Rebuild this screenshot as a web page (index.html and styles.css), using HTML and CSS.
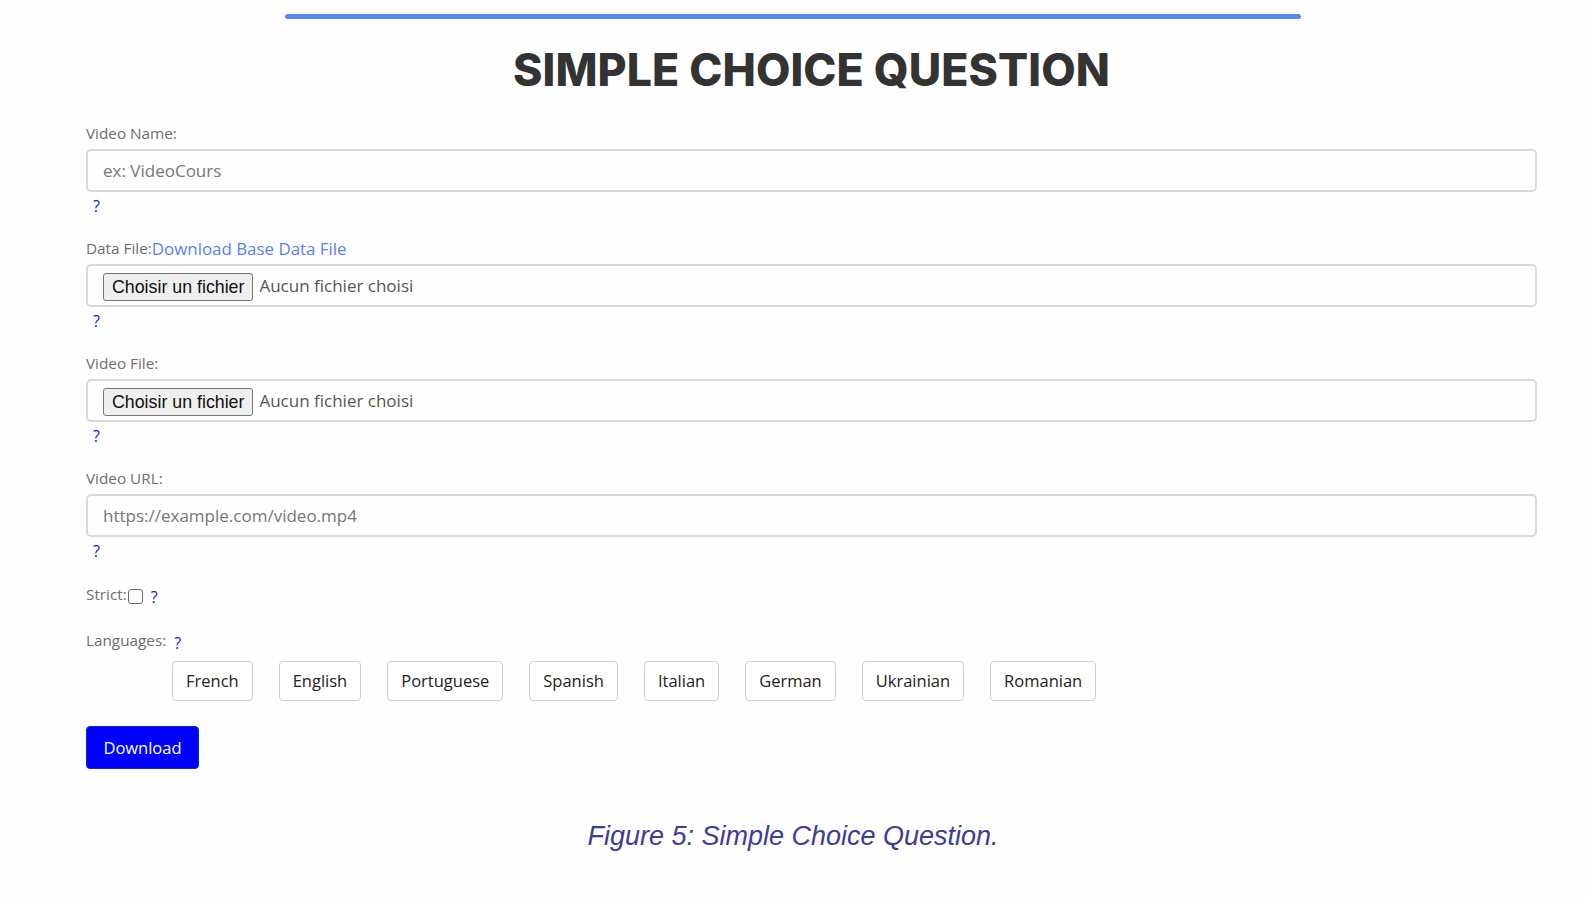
FILE: index.html
```html
<!DOCTYPE html>
<html lang="en">
<head>
<meta charset="utf-8">
<title>Simple Choice Question</title>
<link rel="stylesheet" href="styles.css">
</head>
<body>
  <div class="topbar-wrap"><div class="topbar"></div></div>
  <main class="container">
    <h1 class="title">SIMPLE CHOICE QUESTION</h1>
    <form class="form">
      <div class="group">
        <label class="label">Video Name:</label>
        <div class="field"><span class="placeholder">ex: VideoCours</span></div>
        <div class="help">?</div>
      </div>
      <div class="group">
        <label class="label">Data File:<a class="link" href="#">Download Base Data File</a></label>
        <div class="field"><span class="filebtn">Choisir un fichier</span><span class="nofile">Aucun fichier choisi</span></div>
        <div class="help">?</div>
      </div>
      <div class="group">
        <label class="label">Video File:</label>
        <div class="field"><span class="filebtn">Choisir un fichier</span><span class="nofile">Aucun fichier choisi</span></div>
        <div class="help">?</div>
      </div>
      <div class="group">
        <label class="label">Video URL:</label>
        <div class="field"><span class="placeholder">https://example.com/video.mp4</span></div>
        <div class="help">?</div>
      </div>
      <div class="inline-row strict">
        <span class="label">Strict:</span><span class="checkbox"></span><span class="help inline">?</span>
      </div>
      <div class="inline-row languages">
        <span class="label">Languages:</span><span class="help inline">?</span>
      </div>
      <div class="lang-row">
        <button type="button" class="lang">French</button>
        <button type="button" class="lang">English</button>
        <button type="button" class="lang">Portuguese</button>
        <button type="button" class="lang">Spanish</button>
        <button type="button" class="lang">Italian</button>
        <button type="button" class="lang">German</button>
        <button type="button" class="lang">Ukrainian</button>
        <button type="button" class="lang">Romanian</button>
      </div>
      <button type="button" class="download">Download</button>
    </form>
  </main>
  <p class="caption">Figure 5: Simple Choice Question.</p>
</body>
</html>
```

FILE: styles.css
```css
* { box-sizing: border-box; }

html, body {
  margin: 0;
  padding: 0;
  background: #fefefe;
}

body {
  font-family: "Open Sans", "Noto Sans", sans-serif;
  color: #333;
}

.topbar-wrap {
  display: flex;
  justify-content: center;
  padding-top: 14px;
}

.topbar {
  width: 1016px;
  height: 5px;
  border-radius: 3px;
  background: #5b88f4;
}

.container {
  padding: 0 49px 0 86px;
}

.title {
  margin: 26px 0 0;
  text-align: center;
  font-family: "Inter", "DejaVu Sans", sans-serif;
  font-weight: 800;
  font-size: 44.6px;
  line-height: 50px;
  color: #333;
  letter-spacing: 0.1px;
}

.form {
  margin-top: 28px;
  display: flex;
  flex-direction: column;
}

.group {
  display: flex;
  flex-direction: column;
  margin-bottom: 22px;
}

.label {
  font-size: 15.3px;
  line-height: 20px;
  color: #6e6e6e;
  height: 20px;
}

.link {
  color: #5b7ef2;
  text-decoration: none;
  font-size: 16.9px;
  position: relative;
  top: 1px;
}

.field {
  margin-top: 6px;
  height: 43px;
  border: 2px solid #d9d9d9;
  border-radius: 5px;
  display: flex;
  align-items: center;
  padding-left: 15px;
  font-size: 17px;
}

.placeholder {
  color: #777;
}

.filebtn {
  font-family: "Liberation Sans", Arial, sans-serif;
  font-size: 17.8px;
  color: #111;
  background: #efefef;
  border: 1px solid #767676;
  border-radius: 3px;
  height: 28px;
  line-height: 26px;
  padding: 0 8px;
  white-space: nowrap;
  position: relative;
  top: 1px;
}

.nofile {
  margin-left: 6px;
  color: #555;
}

.help {
  margin-top: 4px;
  padding-left: 7px;
  color: #1010ff;
  font-size: 16px;
  line-height: 20px;
  height: 20px;
}

.help.inline {
  margin-top: 0;
  padding-left: 0;
  margin-left: 8px;
  position: relative;
  top: 3px;
}

.inline-row {
  display: flex;
  align-items: center;
  height: 20px;
}

.strict {
  margin-top: 1px;
}

.languages {
  margin-top: 26px;
}

.checkbox {
  width: 15px;
  height: 15px;
  margin-left: 1px;
  border: 1.5px solid #6b6b6b;
  border-radius: 3px;
  position: relative;
  top: 2px;
}

.lang-row {
  display: flex;
  gap: 26px;
  padding-left: 86px;
  margin-top: 11px;
}

.lang {
  font-family: "Open Sans", "Noto Sans", sans-serif;
  font-size: 16.5px;
  color: #222;
  background: #fff;
  border: 1.5px solid #d0d0d0;
  border-radius: 4px;
  height: 40px;
  padding: 0 13px;
  line-height: 1;
}

.download {
  align-self: flex-start;
  margin-top: 25px;
  width: 113px;
  height: 43px;
  background: #0000fe;
  color: #fff;
  border: 1px solid #0a2ad0;
  border-radius: 4px;
  font-family: "Open Sans", "Noto Sans", sans-serif;
  font-size: 16.5px;
}

.caption {
  margin: 52px 0 0;
  text-align: center;
  font-family: "Liberation Sans", Arial, sans-serif;
  font-style: italic;
  font-size: 27px;
  color: #3d3d98;
}
```
